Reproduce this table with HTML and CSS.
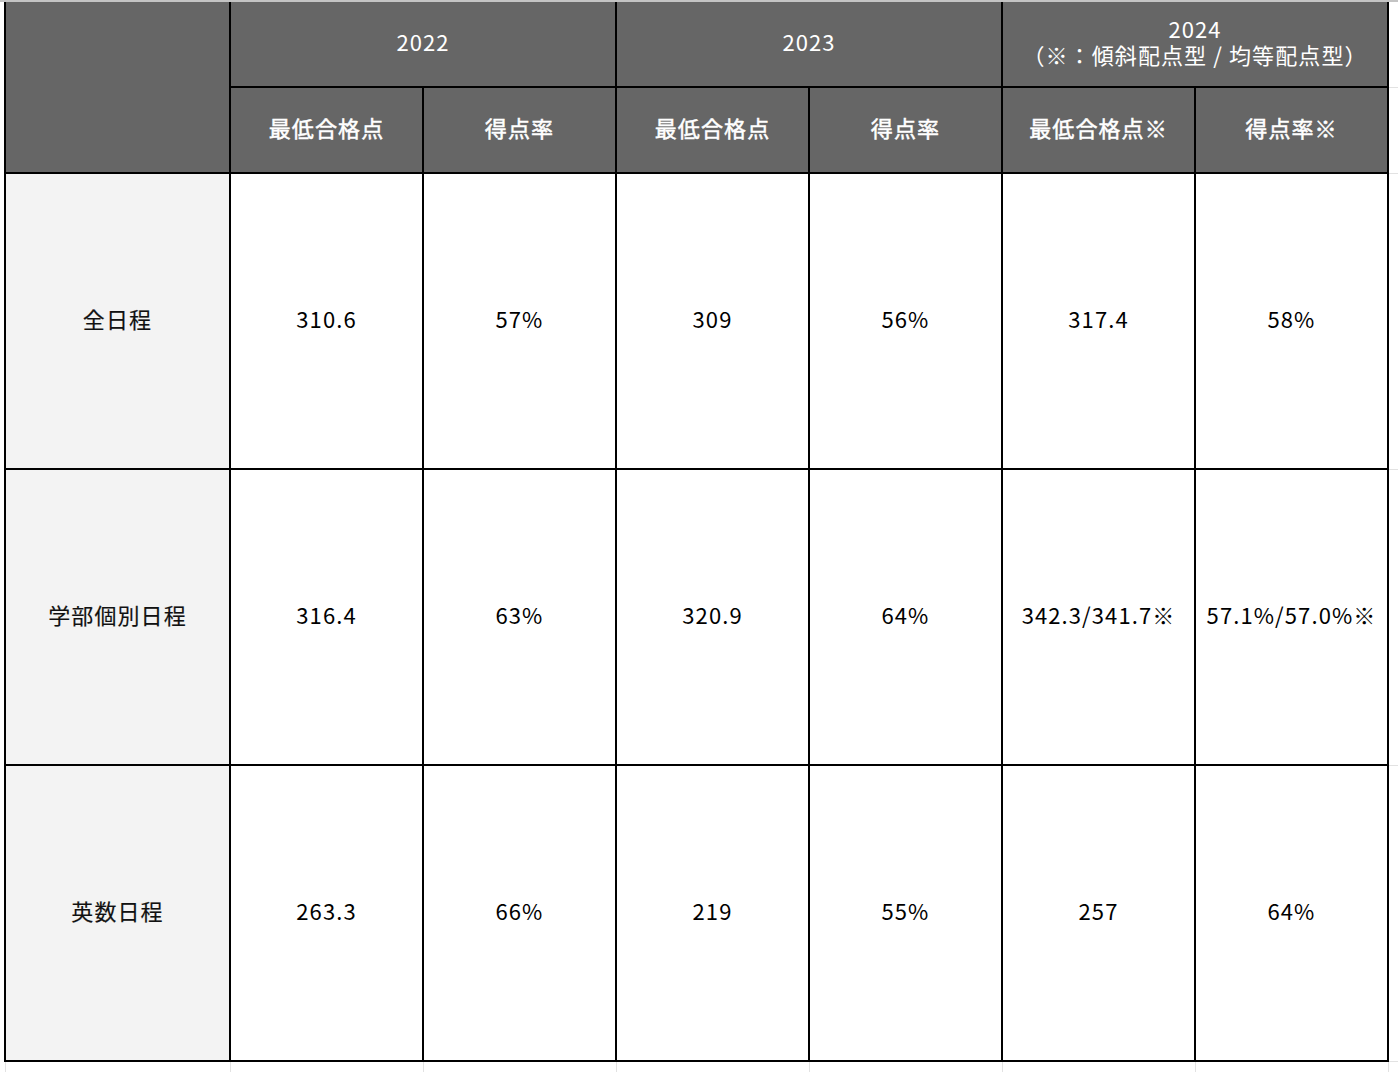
FILE: index.html
```html
<!DOCTYPE html>
<html lang="ja">
<head>
<meta charset="utf-8">
<link rel="stylesheet" href="styles.css">
</head>
<body>
<div class="topline"></div>
<table class="sheet">
  <colgroup>
    <col class="c-label">
    <col class="c-data"><col class="c-data"><col class="c-data">
    <col class="c-data"><col class="c-data"><col class="c-data">
    <col class="c-pad">
  </colgroup>
  <tr class="h1">
    <th class="hd corner" rowspan="2"></th>
    <th class="hd year" colspan="2">2022</th>
    <th class="hd year" colspan="2">2023</th>
    <th class="hd year" colspan="2"><span class="yl">2024</span><span class="yl">（※：傾斜配点型 / 均等配点型）</span></th>
    <td class="pad"></td>
  </tr>
  <tr class="h2">
    <th class="hd sub">最低合格点</th>
    <th class="hd sub">得点率</th>
    <th class="hd sub">最低合格点</th>
    <th class="hd sub">得点率</th>
    <th class="hd sub">最低合格点※</th>
    <th class="hd sub">得点率※</th>
    <td class="pad"></td>
  </tr>
  <tr class="data">
    <th class="lab">全日程</th>
    <td>310.6</td><td>57%</td><td>309</td><td>56%</td><td>317.4</td><td>58%</td>
    <td class="pad"></td>
  </tr>
  <tr class="data">
    <th class="lab">学部個別日程</th>
    <td>316.4</td><td>63%</td><td>320.9</td><td>64%</td><td>342.3/341.7※</td><td>57.1%/57.0%※</td>
    <td class="pad"></td>
  </tr>
  <tr class="data">
    <th class="lab">英数日程</th>
    <td>263.3</td><td>66%</td><td>219</td><td>55%</td><td>257</td><td>64%</td>
    <td class="pad"></td>
  </tr>
  <tr class="foot">
    <td></td><td></td><td></td><td></td><td></td><td></td><td></td><td class="pad"></td>
  </tr>
</table>
</body>
</html>
```
FILE: styles.css
```css
html, body {
  margin: 0;
  padding: 0;
  background: #ffffff;
  overflow: hidden;
}
body {
  font-family: "Noto Sans CJK JP", "Noto Sans", sans-serif;
  color: #000;
}
.topline {
  height: 2px;
  background: #c4c4c4;
}
.sheet {
  border-collapse: collapse;
  table-layout: fixed;
  margin-left: 4px;
  width: 1403px;
}
.c-label { width: 225px; }
.c-data { width: 193px; }
.c-pad { width: 20px; }

.sheet th, .sheet td {
  border: 2px solid #000;
  padding: 0 0 6px 0;
  text-align: center;
  vertical-align: middle;
  font-size: 22px;
  line-height: 26px;
  font-weight: 400;
  letter-spacing: 1.1px;
}
.sheet tr.h1 th { border-top: none; }
.h1 { height: 85px; }
.h2 { height: 86px; }
.data { height: 296px; }
.foot { height: 20px; }

.hd {
  background: #666666;
  color: #ffffff;
}
.year {
  letter-spacing: 0.3px;
}
.yl {
  display: block;
  height: 26px;
}
.sub {
  letter-spacing: 0;
  -webkit-text-stroke: 0.5px #ffffff;
}
.lab {
  background: #f3f3f3;
  color: #111;
  letter-spacing: 0;
  -webkit-text-stroke: 0.15px #111;
}
.sheet .pad {
  border-top: 1px solid #e2e2e2;
  border-bottom: 1px solid #e2e2e2;
  border-right: none;
  background: #fff;
}
.sheet tr.h1 .pad { border-top: none; }
.sheet .foot td {
  border-bottom: none;
  border-left: 1px solid #e2e2e2;
  border-right: 1px solid #e2e2e2;
}
.sheet .foot td.pad { border-right: none; }
```
